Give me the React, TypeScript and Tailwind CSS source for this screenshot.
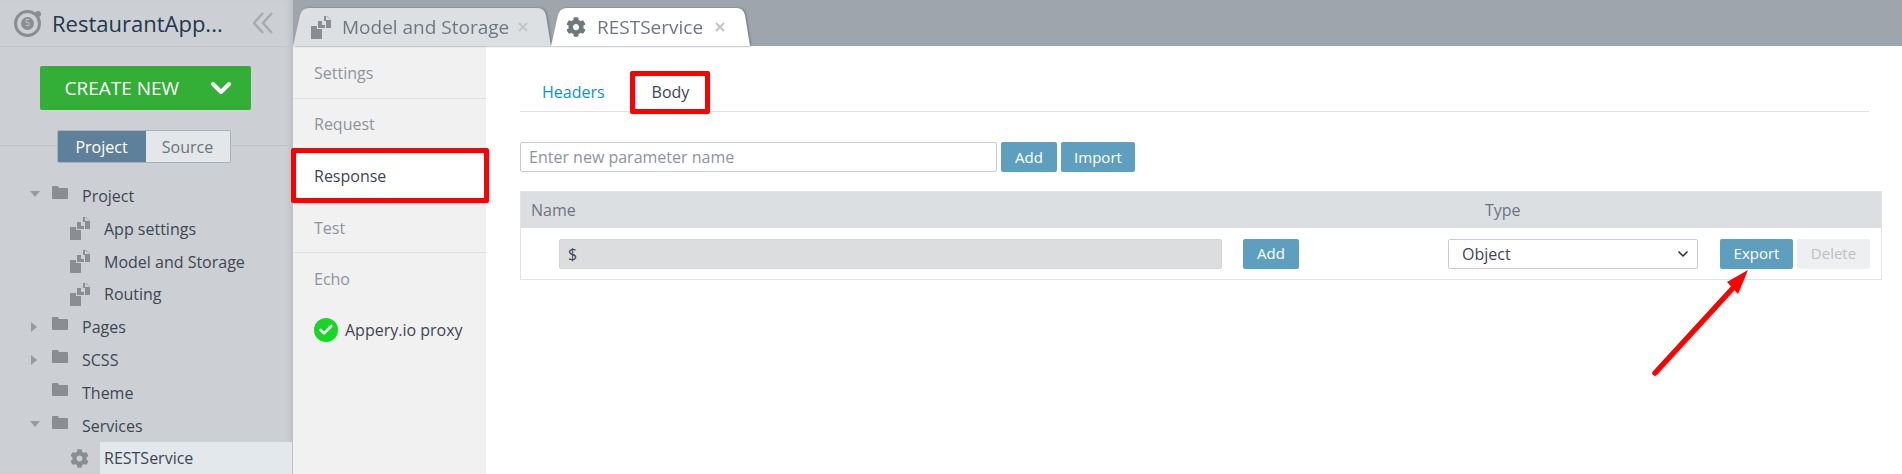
import { ChevronDown, Check } from 'lucide-react';
import { FaCog } from 'react-icons/fa';

const FilesIcon = ({ className = '', cut = '#ccd0d4' }: { className?: string; cut?: string }) => (
  <svg viewBox="0 0 20 23" className={className} fill="#8a8d91">
    <path d="M0 10h6v3h5v10H0z" />
    <path d="M7 5h4v4h3v3H7z" />
    <path d="M13 0h3l4 4v8h-5V5h-2z" />
    <path d="M15 0l5 4h-5z" fill={cut} />
  </svg>
);

const TreeFolder = ({ label, arrow }: { label: string; arrow?: 'down' | 'right' }) => (
  <div className="flex h-[33px] items-center">
    <div className="flex w-[52px] justify-end pr-[12px]">
      {arrow === 'down' && <div className="h-0 w-0 -translate-y-[2px] border-x-[5px] border-t-[6px] border-x-transparent border-t-[#969a9f]" />}
      {arrow === 'right' && <div className="mr-[3px] h-0 w-0 border-y-[5px] border-l-[6px] border-y-transparent border-l-[#969a9f]" />}
    </div>
    <svg viewBox="0 0 16 13" className="h-[13px] w-[16px] -translate-y-[3px]" fill="#8a8d91">
      <path d="M1 0h5l1 2h8a1 1 0 0 1 1 1v9a1 1 0 0 1-1 1H1a1 1 0 0 1-1-1V1a1 1 0 0 1 1-1z" />
    </svg>
    <span className="ml-[14px] text-[16px] text-[#3d4653]">{label}</span>
  </div>
);

const TreeFile = ({ label, short }: { label: string; short?: boolean }) => (
  <div className={`flex items-center pl-[70px] ${short ? 'h-[32px]' : 'h-[33px]'}`}>
    <FilesIcon className="h-[23px] w-[20px]" />
    <span className="ml-[14px] text-[16px] text-[#3d4653]">{label}</span>
  </div>
);

const Sidebar = () => (
  <aside className="relative flex w-[293px] shrink-0 flex-col bg-[#ccd0d4] shadow-[inset_-6px_0_5px_-3px_#b9bfc5]">
    <div className="flex h-[48px] items-center border-b border-[#c2c6ca] pl-[14px]">
      <div className="relative flex h-[27px] w-[27px] items-center justify-center rounded-full border-[3px] border-[#8b8d90]">
        <div className="flex h-[13px] w-[13px] items-center justify-center rounded-full bg-[#8b8d90] text-[9px] text-[#ccd0d4]">5</div>
        <div className="absolute -right-[3px] -top-[2px] h-[6px] w-[6px] rounded-full bg-[#8b8d90]" />
      </div>
      <span className="ml-[11px] w-[201px] whitespace-nowrap text-[22px] text-[#23384e]">RestaurantApp...</span>
      <svg viewBox="0 0 20 22" className="h-[22px] w-[20px]" fill="none" stroke="#a6aaae" strokeWidth="2.4">
        <path d="M10 1L1 11l9 10" />
        <path d="M19 1l-9 10 9 10" />
      </svg>
    </div>
    <div className="flex justify-center pr-[3px] pt-[19px]">
      <button className="flex h-[44px] w-[211px] items-center rounded-[2px] bg-[#33ae36] pl-[25px] text-[19px] text-white">
        CREATE NEW
        <ChevronDown className="ml-[26px] h-[32px] w-[32px]" strokeWidth={3} />
      </button>
    </div>
    <div className="relative mt-[20px] flex justify-center pr-[6px]">
      <div className="absolute inset-x-0 top-[15px] border-t border-[#bfc4c9]" />
      <div className="relative flex h-[33px] w-[174px] overflow-hidden rounded-[2px] border border-[#a9b2bb] text-[16px]">
        <div className="flex w-[88px] items-center justify-center bg-[#5f809a] text-white">Project</div>
        <div className="flex flex-1 items-center justify-center bg-[#e3e7ea] text-[#6b7480]">Source</div>
      </div>
    </div>
    <div className="mt-[16px]">
      <TreeFolder label="Project" arrow="down" />
      <TreeFile label="App settings" />
      <TreeFile label="Model and Storage" />
      <TreeFile label="Routing" short />
      <TreeFolder label="Pages" arrow="right" />
      <TreeFolder label="SCSS" arrow="right" />
      <TreeFolder label="Theme" />
      <TreeFolder label="Services" arrow="down" />
      <div className="flex h-[32px] items-center pl-[70px]">
        <FaCog className="h-[19px] w-[19px] text-[#8a8d91]" />
        <div className="ml-[11px] mr-[1px] flex h-[32px] flex-1 items-center bg-[#e3e8ec] pl-[4px] text-[16px] text-[#3d4653]">RESTService</div>
      </div>
    </div>
  </aside>
);

const TabClose = ({ className = '' }: { className?: string }) => (
  <svg viewBox="0 0 10 10" className={`h-[10px] w-[10px] ${className}`} stroke="#c2c6ca" strokeWidth="2.2">
    <path d="M1 1l8 8M9 1l-8 8" />
  </svg>
);

const TabBar = () => (
  <div className="flex h-[46px] items-end bg-[#9ea5ac]">
    <div className="relative z-0 [filter:drop-shadow(1px_0_1px_#6f767d)]">
      <div className="flex h-[38px] w-[258px] items-center bg-[#dde0e3] pl-[18px] text-[19px] text-[#6f7780] [clip-path:path('M0,38L7,7Q9,0,16,0L245,0Q251,0,253,7L258,38Z')]">
        <FilesIcon className="h-[23px] w-[20px]" cut="#dde0e3" />
        <span className="ml-[11px]">Model and Storage</span>
        <TabClose className="ml-[9px]" />
      </div>
    </div>
    <div className="relative z-10 [filter:drop-shadow(1px_0_1px_#6f767d)]">
      <div className="flex h-[38px] w-[199px] items-center bg-white pl-[15px] text-[19px] text-[#6f7780] [clip-path:path('M0,38L7,7Q9,0,16,0L186,0Q192,0,194,7L199,38Z')]">
        <FaCog className="h-[20px] w-[20px] text-[#6f7780]" />
        <span className="ml-[11px]">RESTService</span>
        <TabClose className="ml-[12px]" />
      </div>
    </div>
  </div>
);

const SideMenu = () => (
  <div className="flex w-[193px] shrink-0 flex-col bg-[#f1f1f1] text-[16px] text-[#8d949d]">
    <div className="flex h-[53px] items-center border-b border-[#dedfe0] pl-[21px] pt-[1px]">Settings</div>
    <div className="flex h-[50px] items-center pl-[21px]">Request</div>
    <div className="flex h-[53px] items-center bg-white pl-[21px] text-[#3d4653]">Response</div>
    <div className="flex h-[51px] items-center border-b border-[#dedfe0] pl-[21px] pt-[1px]">Test</div>
    <div className="flex h-[51px] items-center pl-[21px]">Echo</div>
    <div className="mt-[1px] flex h-[50px] items-center pl-[21px] text-[#3d4653]">
      <div className="flex h-[24px] w-[24px] items-center justify-center rounded-full bg-[#18d626]">
        <Check className="h-[16px] w-[16px] text-white" strokeWidth={4} />
      </div>
      <span className="ml-[7px]">Appery.io proxy</span>
    </div>
  </div>
);

const BlueButton = ({ label, className = '' }: { label: string; className?: string }) => (
  <button className={`flex items-center justify-center rounded-[2px] bg-[#5e9fc0] text-[15px] text-white ${className}`}>{label}</button>
);

const Content = () => (
  <div className="flex-1 bg-white pl-[34px] text-[16px]">
    <div className="mr-[33px] mt-[26px] flex h-[40px] items-center border-b border-[#dfe1e3] pt-[1px]">
      <span className="ml-[22px] text-[#0f8fd6]">Headers</span>
      <span className="ml-[47px] text-[#3d4653]">Body</span>
    </div>
    <div className="mt-[30px] flex gap-[4px]">
      <div className="flex h-[30px] w-[477px] items-center rounded-[2px] border border-[#c8ccd0] pl-[8px] text-[#8d949d]">Enter new parameter name</div>
      <BlueButton label="Add" className="h-[30px] w-[56px]" />
      <BlueButton label="Import" className="h-[30px] w-[74px]" />
    </div>
    <div className="mr-[20px] mt-[19px] border border-[#e1e3e5]">
      <div className="flex h-[36px] items-center bg-[#dcdfe2] pl-[10px] text-[#6b7480]">
        <span className="w-[954px]">Name</span>
        <span>Type</span>
      </div>
      <div className="flex h-[51px] items-center pl-[38px]">
        <div className="flex h-[30px] w-[663px] items-center rounded-[2px] border border-[#d2d4d6] bg-[#dcdddf] pl-[8px] text-[#3d4653]">$</div>
        <BlueButton label="Add" className="ml-[21px] h-[30px] w-[56px]" />
        <div className="ml-[149px] flex h-[30px] w-[250px] items-center justify-between rounded-[2px] border border-[#c8ccd0] pl-[13px] pr-[6px] text-[#3d4653]">
          Object
          <ChevronDown className="h-[16px] w-[16px] text-[#33383d]" strokeWidth={2.5} />
        </div>
        <BlueButton label="Export" className="ml-[22px] h-[30px] w-[73px]" />
        <button className="ml-[4px] h-[30px] w-[73px] rounded-[2px] bg-[#eeeff0] text-[15px] text-[#bdc0c4]">Delete</button>
      </div>
    </div>
  </div>
);

export default function App() {
  return (
    <div className="relative flex h-[474px] w-[1902px] overflow-hidden bg-white font-['Open_Sans','Noto_Sans',sans-serif]">
      <Sidebar />
      <div className="flex min-w-0 flex-1 flex-col">
        <TabBar />
        <div className="flex flex-1">
          <SideMenu />
          <Content />
        </div>
      </div>

      {/* annotations drawn over the screenshot */}
      <div className="absolute left-[291px] top-[148px] h-[55px] w-[198px] rounded-[2px] border-[5px] border-[#ff0000]" />
      <div className="absolute left-[630px] top-[71px] h-[43px] w-[80px] rounded-[2px] border-[5px] border-[#ff0000]" />
      <svg className="absolute left-[1640px] top-[260px] h-[125px] w-[125px]" viewBox="0 0 125 125">
        <path d="M15 113 L93 28" stroke="#ff0000" strokeWidth="5.5" strokeLinecap="round" fill="none" />
        <path d="M108 10 L87 22 L98 34 Z" fill="#ff0000" />
      </svg>
    </div>
  );
}
